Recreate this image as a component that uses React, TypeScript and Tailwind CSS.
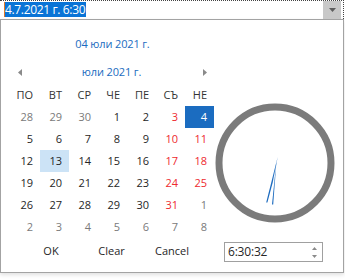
import React from "react";

const RED = "text-[#ee2a2f]";
const GRAY = "text-[#7a7a7a]";
const DARK = "text-[#262626]";

type Cell = { d: number; c: string; sel?: boolean; today?: boolean };

const rows: Cell[][] = [
  [
    { d: 28, c: GRAY },
    { d: 29, c: GRAY },
    { d: 30, c: GRAY },
    { d: 1, c: DARK },
    { d: 2, c: DARK },
    { d: 3, c: RED },
    { d: 4, c: "text-white", sel: true },
  ],
  [
    { d: 5, c: DARK },
    { d: 6, c: DARK },
    { d: 7, c: DARK },
    { d: 8, c: DARK },
    { d: 9, c: DARK },
    { d: 10, c: RED },
    { d: 11, c: RED },
  ],
  [
    { d: 12, c: DARK },
    { d: 13, c: DARK, today: true },
    { d: 14, c: DARK },
    { d: 15, c: DARK },
    { d: 16, c: DARK },
    { d: 17, c: RED },
    { d: 18, c: RED },
  ],
  [
    { d: 19, c: DARK },
    { d: 20, c: DARK },
    { d: 21, c: DARK },
    { d: 22, c: DARK },
    { d: 23, c: DARK },
    { d: 24, c: RED },
    { d: 25, c: RED },
  ],
  [
    { d: 26, c: DARK },
    { d: 27, c: DARK },
    { d: 28, c: DARK },
    { d: 29, c: DARK },
    { d: 30, c: DARK },
    { d: 31, c: RED },
    { d: 1, c: GRAY },
  ],
  [
    { d: 2, c: GRAY },
    { d: 3, c: GRAY },
    { d: 4, c: GRAY },
    { d: 5, c: GRAY },
    { d: 6, c: GRAY },
    { d: 7, c: GRAY },
    { d: 8, c: GRAY },
  ],
];

const heads = ["ПО", "ВТ", "СР", "ЧЕ", "ПЕ", "СЪ", "НЕ"];

export default function App() {
  return (
    <div
      className="w-[345px] h-[280px] bg-white relative overflow-hidden"
      style={{ fontFamily: '"Open Sans", "Noto Sans", sans-serif' }}
    >
      {/* editor */}
      <div className="h-[19px] flex border-t border-r border-dotted border-[#444] w-[344px]">
        <div className="flex-1 flex items-start pt-[1px] pl-[4px]">
          <div className="relative h-[15px] bg-[#0a74d6] text-white text-[12px] leading-[15px] tracking-[-0.35px] pr-[1px] pl-[1px]">
            <span className="absolute left-0 top-0 w-[1px] h-[15px] bg-[#e07a2a]" />
            4.7.2021 г. 6:30
          </div>
        </div>
        <div className="w-[18px] h-[18px] bg-[#c8c8c8] flex items-center justify-center mr-[2px]">
          <svg width="7" height="4" viewBox="0 0 7 4">
            <polygon points="0,0 7,0 3.5,4" fill="#5d5d5d" />
          </svg>
        </div>
      </div>

      {/* popup */}
      <div className="w-[344px] h-[254px] border border-[#a3a3a3] bg-white flex shadow-[0_2px_4px_rgba(0,0,0,0.12)]">
        {/* calendar */}
        <div className="w-[220px] flex flex-col pl-[10px]">
          <div className="w-[203px] h-[17px] mt-[15px] text-center text-[11px] leading-[17px] tracking-[-0.15px] text-[#1b6cc0]">
            04 юли 2021 г.
          </div>
          <div className="w-[203px] h-[18px] mt-[11px] flex items-center justify-between px-[7px] text-[11px]">
            <svg width="4" height="7" viewBox="0 0 4 7">
              <polygon points="4,0 4,7 0,3.5" fill="#8a8a8a" />
            </svg>
            <span className="text-[#1b6cc0] leading-[18px] pr-[2px] tracking-[-0.15px]">юли 2021 г.</span>
            <svg width="4" height="7" viewBox="0 0 4 7">
              <polygon points="0,0 0,7 4,3.5" fill="#8a8a8a" />
            </svg>
          </div>
          <div className="grid grid-cols-[repeat(7,29px)] mt-[3px] text-[11px]">
            {heads.map((h) => (
              <div key={h} className="h-[22px] leading-[22px] text-right pr-[7px] text-[#333]">
                {h}
              </div>
            ))}
            {rows.flat().map((c, i) => (
              <div
                key={i}
                className={
                  "h-[22px] leading-[22px] text-right pr-[7px] " +
                  c.c +
                  (c.sel ? " bg-[#1b6cc0]" : "") +
                  (c.today ? " bg-[#cce3f6]" : "")
                }
              >
                {c.d}
              </div>
            ))}
          </div>
          <div className="flex mt-[2px] pl-[10px] text-[11px] text-[#262626]">
            <div className="w-[60px] h-[22px] leading-[22px] text-center">OK</div>
            <div className="w-[61px] h-[22px] leading-[22px] text-center">Clear</div>
            <div className="w-[60px] h-[22px] leading-[22px] text-center">Cancel</div>
          </div>
        </div>

        {/* clock & time */}
        <div className="flex-1 flex flex-col">
          <div className="mt-[83px] ml-[-6px]">
            <svg width="120" height="120" viewBox="0 0 120 120">
              <circle cx="60" cy="60" r="56" fill="none" stroke="#7b7b7b" strokeWidth="7" />
              <polygon points="62.8,53.5 51.2,99.5 52.4,99.6 57.6,80" fill="#1e6cc0" />
              <polygon points="61.5,57.5 57,101.5 58.2,101.5" fill="#1e6cc0" />
            </svg>
          </div>
          <div className="mt-[19px] ml-[3px] w-[99px] h-[20px] border border-[#a0a0a0] flex items-center">
            <span className="flex-1 pl-[3px] text-[12px] leading-[18px] tracking-[-0.2px] text-[#262626]">6:30:32</span>
            <div className="flex flex-col gap-[5px] pr-[5px]">
              <svg width="5" height="3" viewBox="0 0 5 3">
                <polygon points="0,3 5,3 2.5,0" fill="#8a8a8a" />
              </svg>
              <svg width="5" height="3" viewBox="0 0 5 3">
                <polygon points="0,0 5,0 2.5,3" fill="#8a8a8a" />
              </svg>
            </div>
          </div>
        </div>
      </div>
    </div>
  );
}
